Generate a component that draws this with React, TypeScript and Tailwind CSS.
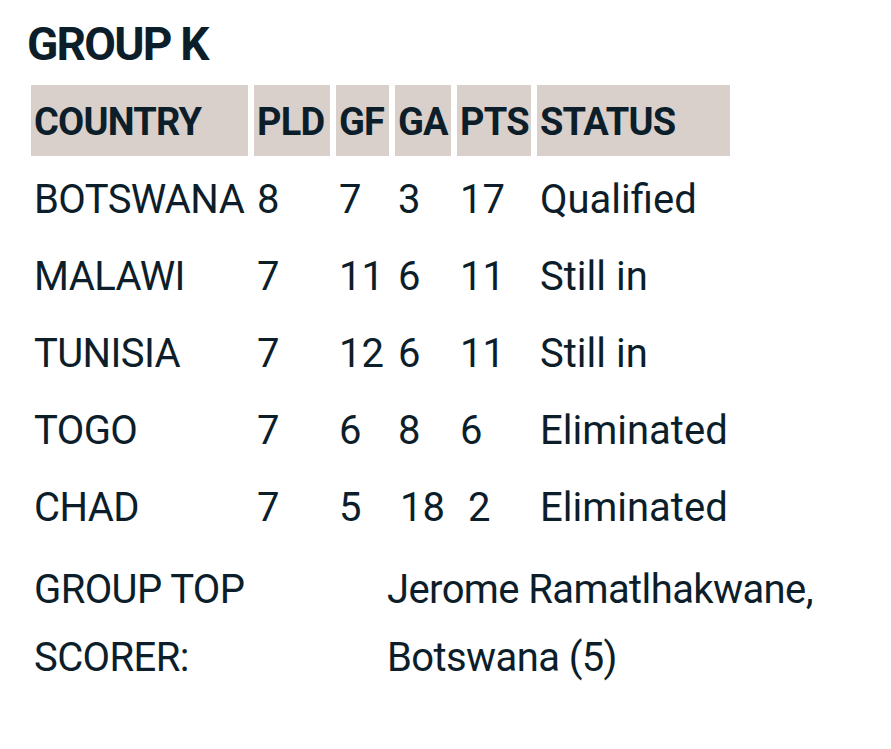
const rows = [
  { country: 'BOTSWANA', pld: '8', gf: '7', ga: '3', pts: '17', status: 'Qualified' },
  { country: 'MALAWI', pld: '7', gf: '11', ga: '6', pts: '11', status: 'Still in' },
  { country: 'TUNISIA', pld: '7', gf: '12', ga: '6', pts: '11', status: 'Still in' },
  { country: 'TOGO', pld: '7', gf: '6', ga: '8', pts: '6', status: 'Eliminated' },
  { country: 'CHAD', pld: '7', gf: '5', ga: '18', pts: '2', status: 'Eliminated', shifted: true },
]

const headers = ['COUNTRY', 'PLD', 'GF', 'GA', 'PTS', 'STATUS']

const cell = 'h-[71px] flex items-center pt-[4px] text-[40px] whitespace-nowrap'

export default function App() {
  return (
    <div
      className="w-[891px] h-[749px] bg-white text-[#0d1e2b] pl-[31px] pt-[16px]"
      style={{ fontFamily: 'Roboto, "Noto Sans", sans-serif' }}
    >
      <h2 className="text-[46px] leading-[56px] font-bold -ml-[4px] mb-[13px] tracking-[-1.8px]">GROUP K</h2>

      {/* Standings */}
      <div className="grid grid-cols-[217px_76px_53px_56px_74px_193px] gap-[6px]">
        {headers.map((h) => (
          <div
            key={h}
            className="h-[71px] flex items-center pt-[4px] pl-[3px] bg-[#d9d0cc] text-[38px] font-bold tracking-[-0.8px] whitespace-nowrap"
          >
            {h}
          </div>
        ))}
        {rows.map((r) => (
          <div key={r.country} className="contents">
            <div className={`${cell} pl-[3px] tracking-[-0.6px]`}>{r.country}</div>
            <div className={`${cell} pl-[3px]`}>{r.pld}</div>
            <div className={`${cell} pl-[3px]`}>{r.gf}</div>
            <div className={r.shifted ? `${cell} pl-[5px]` : `${cell} pl-[3px]`}>{r.ga}</div>
            <div className={r.shifted ? `${cell} pl-[11px]` : `${cell} pl-[3px]`}>{r.pts}</div>
            <div className={`${cell} pl-[3px]`}>{r.status}</div>
          </div>
        ))}
      </div>

      {/* Top scorer */}
      <div className="mt-[15px] pl-[3px] grid grid-cols-[353px_470px] text-[40px] leading-[68px] tracking-[-0.6px]">
        <div className="w-[240px]">GROUP TOP SCORER:</div>
        <div>Jerome Ramatlhakwane, Botswana (5)</div>
      </div>
    </div>
  )
}
